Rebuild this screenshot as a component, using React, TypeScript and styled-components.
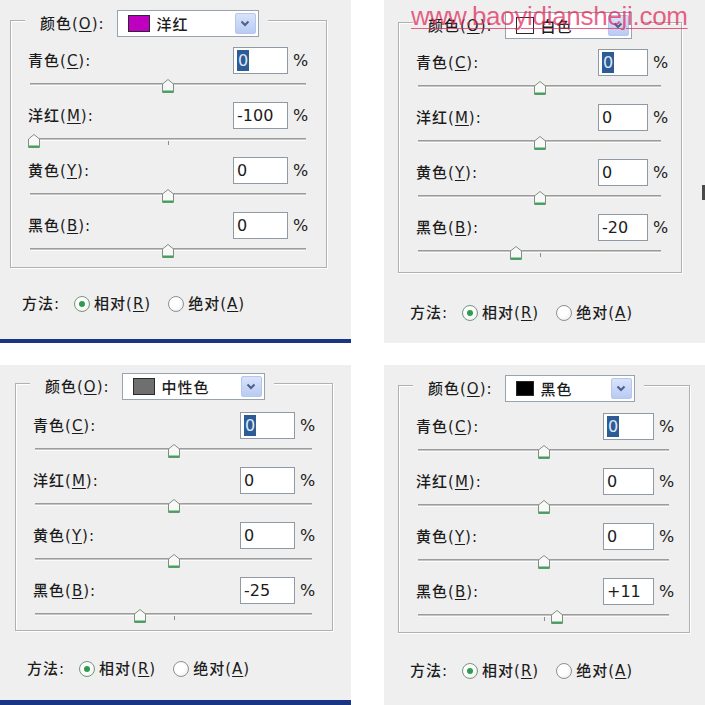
import React from "react";
import styled, { createGlobalStyle } from "styled-components";

const GlobalStyle = createGlobalStyle`
	html, body {
		margin: 0;
		padding: 0;
		background: #fff;
	}
	body {
		font-family: "DejaVu Sans", "Noto Sans CJK SC", sans-serif;
		color: #1c1c1c;
	}
`;

const Sheet = styled.div`
	display: grid;
	grid-template-columns: 351px 321px;
	grid-template-rows: 343px 340px;
	column-gap: 33px;
	row-gap: 22px;
	width: 705px;
	height: 705px;
	background: #fff;
	overflow: hidden;
`;

const Panel = styled.div<{ $top: number; $left: number; $bar: number }>`
	position: relative;
	box-sizing: border-box;
	padding: ${(p) => p.$top}px 0 0 ${(p) => p.$left}px;
	background: #efefef;
	border-bottom: ${(p) => (p.$bar ? `${p.$bar}px solid #1a3583` : "none")};
	overflow: hidden;
`;

const Group = styled.div<{ $w: number; $h: number }>`
	box-sizing: border-box;
	width: ${(p) => p.$w}px;
	height: ${(p) => p.$h}px;
	border: 1px solid #b1b1b1;
	box-shadow: inset 1px 1px 0 #fff, 1px 1px 0 #fff;
	display: flex;
	flex-direction: column;
	padding-left: 17px;
`;

const Legend = styled.div<{ $mb: number }>`
	align-self: flex-start;
	display: flex;
	align-items: center;
	gap: 12px;
	height: 27px;
	margin: -11px 0 ${(p) => p.$mb}px -3px;
	padding: 0 9px 0 15px;
	background: #efefef;
`;

const Label = styled.span`
	font-size: 15px;
	font-weight: 500;
	line-height: 20px;
	letter-spacing: 1px;
	white-space: nowrap;

	u {
		text-decoration: underline;
		text-underline-offset: 2px;
		text-decoration-thickness: 1px;
	}
`;

const Select = styled.div<{ $w: number }>`
	box-sizing: border-box;
	width: ${(p) => p.$w}px;
	height: 27px;
	display: flex;
	align-items: center;
	padding: 0 2px 0 10px;
	border: 1px solid #98a3b0;
	background: #fff;
`;

const Swatch = styled.span<{ $c: string; $w: number; $h: number }>`
	flex: none;
	box-sizing: border-box;
	width: ${(p) => p.$w}px;
	height: ${(p) => p.$h}px;
	background: ${(p) => p.$c};
	border: 1px solid #2a2a2a;
`;

const SelectText = styled.span`
	flex: 1;
	margin-left: 7px;
	font-size: 15px;
	font-weight: 500;
	letter-spacing: 1px;
	white-space: nowrap;
`;

const DropButton = styled.span`
	flex: none;
	box-sizing: border-box;
	width: 21px;
	height: 21px;
	display: flex;
	align-items: center;
	justify-content: center;
	border: 1px solid #b6c7ee;
	border-radius: 2px;
	background: linear-gradient(#d9e3fa, #b9cbf3);
`;

const Field = styled.div<{ $gap: number }>`
	& + & {
		margin-top: ${(p) => p.$gap}px;
	}
`;

const Head = styled.div<{ $inputW: number; $pct: number }>`
	display: grid;
	grid-template-columns: 1fr ${(p) => p.$inputW}px ${(p) => p.$pct}px;
	align-items: center;
	height: 27px;
`;

const NumBox = styled.div`
	box-sizing: border-box;
	height: 27px;
	display: flex;
	align-items: center;
	padding-left: 3px;
	border: 1px solid #8f9aa5;
	background: #fff;
	font-size: 16px;
`;

const Selected = styled.span`
	background: #2c5b96;
	color: #dfe9f5;
	line-height: 21px;
	padding: 0 1px;
`;

const Pct = styled.span`
	padding-left: 5px;
	font-size: 16px;
`;

const Slider = styled.div`
	position: relative;
	box-sizing: border-box;
	height: 18px;
	padding-top: 9px;
	margin: 0 20px 0 2px;
`;

const Track = styled.div`
	height: 1px;
	background: #c4c4c4;
	border-top: 1px solid #9c9c9c;
	border-bottom: 1px solid #fbfbfb;
`;

const Tick = styled.span`
	position: absolute;
	left: 50%;
	top: 12px;
	width: 1px;
	height: 4px;
	background: #8c8c8c;
`;

const Thumb = styled.svg`
	position: absolute;
	top: 5px;
	width: 12px;
	height: 14px;
`;

const Method = styled.div<{ $mt: number }>`
	display: flex;
	align-items: center;
	height: 20px;
	margin: ${(p) => p.$mt}px 0 0 12px;
	font-size: 15px;
	white-space: nowrap;
`;

const Radio = styled.span<{ $on?: boolean }>`
	position: relative;
	box-sizing: border-box;
	flex: none;
	width: 16px;
	height: 16px;
	margin: 0 4px 0 ${(p) => (p.$on ? 14 : 17)}px;
	border-radius: 50%;
	border: 1px solid ${(p) => (p.$on ? "#6f9a7c" : "#8c9197")};
	background: radial-gradient(circle at 40% 40%, #ffffff 40%, #e3e6e3);

	&::after {
		content: "";
		display: ${(p) => (p.$on ? "block" : "none")};
		position: absolute;
		left: 4px;
		top: 4px;
		width: 6px;
		height: 6px;
		border-radius: 50%;
		background: #2f9b4d;
	}
`;

const Watermark = styled.div`
	position: absolute;
	left: 27px;
	top: 0;
	font-family: "Liberation Sans", Arial, sans-serif;
	font-size: 26px;
	letter-spacing: -0.3px;
	line-height: 32px;
	color: rgba(225, 38, 88, 0.72);
	text-decoration: underline;
	text-decoration-thickness: 1px;
	text-underline-offset: 3px;
	white-space: nowrap;
`;

const EdgeMark = styled.span`
	position: absolute;
	right: 0;
	top: 185px;
	width: 3px;
	height: 15px;
	background: #4a4a4a;
`;

const Chevron = () => (
	<svg width="10" height="7" viewBox="0 0 10 7">
		<path d="M1.5 1.5 L5 5 L8.5 1.5" fill="none" stroke="#4a5f8a" strokeWidth="2" />
	</svg>
);

const SliderThumb = ({ value }: { value: number }) => (
	<Thumb
		viewBox="0 0 12 14"
		style={{ left: `calc(50% + ${value / 100} * (50% - 4px) - 6px)` }}
	>
		<path d="M0.5 5 L6 0.5 L11.5 5 V13.5 H0.5 Z" fill="#f7f8f7" stroke="#80907f" />
		<path d="M1 12.5 H11" stroke="#3ea45b" strokeWidth="2" />
	</Thumb>
);

type PanelData = {
	top: number;
	left: number;
	bar: number;
	groupW: number;
	groupH: number;
	rowTop: number;
	gap: number;
	inputW: number;
	pct: number;
	dropW: number;
	swatch: { c: string; w: number; h: number };
	name: string;
	values: number[];
	methodMt: number;
	watermark?: boolean;
};

const panels: PanelData[] = [
	{
		top: 20, left: 10, bar: 4, groupW: 317, groupH: 248, rowTop: 27, gap: 11,
		inputW: 55, pct: 38, dropW: 142, swatch: { c: "#c000c0", w: 22, h: 17 },
		name: "洋红", values: [0, -100, 0, 0], methodMt: 26,
	},
	{
		top: 22, left: 14, bar: 0, groupW: 284, groupH: 251, rowTop: 27, gap: 11,
		inputW: 50, pct: 33, dropW: 127, swatch: { c: "#ffffff", w: 18, h: 17 },
		name: "白色", values: [0, 0, 0, -20], methodMt: 30, watermark: true,
	},
	{
		top: 18, left: 15, bar: 5, groupW: 318, groupH: 248, rowTop: 29, gap: 10,
		inputW: 55, pct: 37, dropW: 143, swatch: { c: "#6f6f6f", w: 22, h: 17 },
		name: "中性色", values: [0, 0, 0, -25], methodMt: 28,
	},
	{
		top: 20, left: 14, bar: 0, groupW: 292, groupH: 248, rowTop: 28, gap: 10,
		inputW: 51, pct: 35, dropW: 130, swatch: { c: "#000000", w: 18, h: 15 },
		name: "黑色", values: [0, 0, 0, 11], methodMt: 28,
	},
];

const channels = [
	{ name: "青色", key: "C" },
	{ name: "洋红", key: "M" },
	{ name: "黄色", key: "Y" },
	{ name: "黑色", key: "B" },
];

const formatValue = (v: number) => (v > 0 ? `+${v}` : `${v}`);

const SelectiveColor = ({ data }: { data: PanelData }) => (
	<Panel $top={data.top} $left={data.left} $bar={data.bar}>
		<Group $w={data.groupW} $h={data.groupH}>
			<Legend $mb={data.rowTop - 17}>
				<Label>
					颜色(<u>O</u>):
				</Label>
				<Select $w={data.dropW}>
					<Swatch $c={data.swatch.c} $w={data.swatch.w} $h={data.swatch.h} />
					<SelectText>{data.name}</SelectText>
					<DropButton>
						<Chevron />
					</DropButton>
				</Select>
			</Legend>
			{channels.map((ch, idx) => (
				<Field key={ch.key} $gap={data.gap}>
					<Head $inputW={data.inputW} $pct={data.pct}>
						<Label>
							{ch.name}(<u>{ch.key}</u>):
						</Label>
						<NumBox>
							{idx === 0 ? <Selected>0</Selected> : formatValue(data.values[idx])}
						</NumBox>
						<Pct>%</Pct>
					</Head>
					<Slider>
						<Track />
						<Tick />
						<SliderThumb value={data.values[idx]} />
					</Slider>
				</Field>
			))}
		</Group>
		<Method $mt={data.methodMt}>
			<Label>方法:</Label>
			<Radio $on />
			<Label>
				相对(<u>R</u>)
			</Label>
			<Radio />
			<Label>
				绝对(<u>A</u>)
			</Label>
		</Method>
		{data.watermark && (
			<>
				<Watermark>www.baoyidiansheji.com</Watermark>
				<EdgeMark />
			</>
		)}
	</Panel>
);

const App = () => {
	return (
		<>
			<GlobalStyle />
			<Sheet>
				{panels.map((p) => (
					<SelectiveColor key={p.name} data={p} />
				))}
			</Sheet>
		</>
	);
};

export default App;
